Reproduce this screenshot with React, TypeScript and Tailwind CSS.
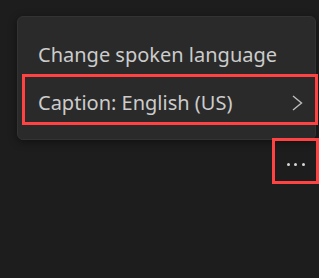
export default function App() {
  return (
    <div
      className="relative w-[319px] h-[278px] bg-[#1d1d1d] overflow-hidden"
      style={{ fontFamily: '"Noto Sans", "Open Sans", sans-serif' }}
    >
      <div className="absolute left-[17px] top-[16px] w-[299px] h-[124px] rounded-[6px] bg-[#2a2a2a] border border-[#333333] shadow-[0_2px_8px_rgba(0,0,0,0.45)] pt-[14px]">
        <div className="flex items-center h-[48px] pl-[20px] pr-[12px] text-[20px] text-[#cccccc]">
          Change spoken language
        </div>
        <div className="flex items-center justify-between h-[48px] pl-[20px] pr-[12px] text-[20px] text-[#cccccc]">
          <span>Caption: English (US)</span>
          <svg width="11" height="16" viewBox="0 0 11 16" fill="none" className="-mt-[1px]">
            <path d="M1 1 L9.5 8 L1 15" stroke="#bdbdbd" strokeWidth="1.4" />
          </svg>
        </div>
      </div>

      {/* annotation highlight boxes */}
      <div className="absolute left-[22px] top-[74px] w-[296px] h-[51px] border-[3px] border-[#ff4343]" />
      <div className="absolute left-[272px] top-[138px] w-[47px] h-[46px] border-[3px] border-[#ff4343] flex items-end justify-center pb-[15px] gap-[4.5px]">
        <span className="w-[3px] h-[3px] rounded-full bg-[#d6d6d6]" />
        <span className="w-[3px] h-[3px] rounded-full bg-[#d6d6d6]" />
        <span className="w-[3px] h-[3px] rounded-full bg-[#d6d6d6]" />
      </div>
    </div>
  );
}
